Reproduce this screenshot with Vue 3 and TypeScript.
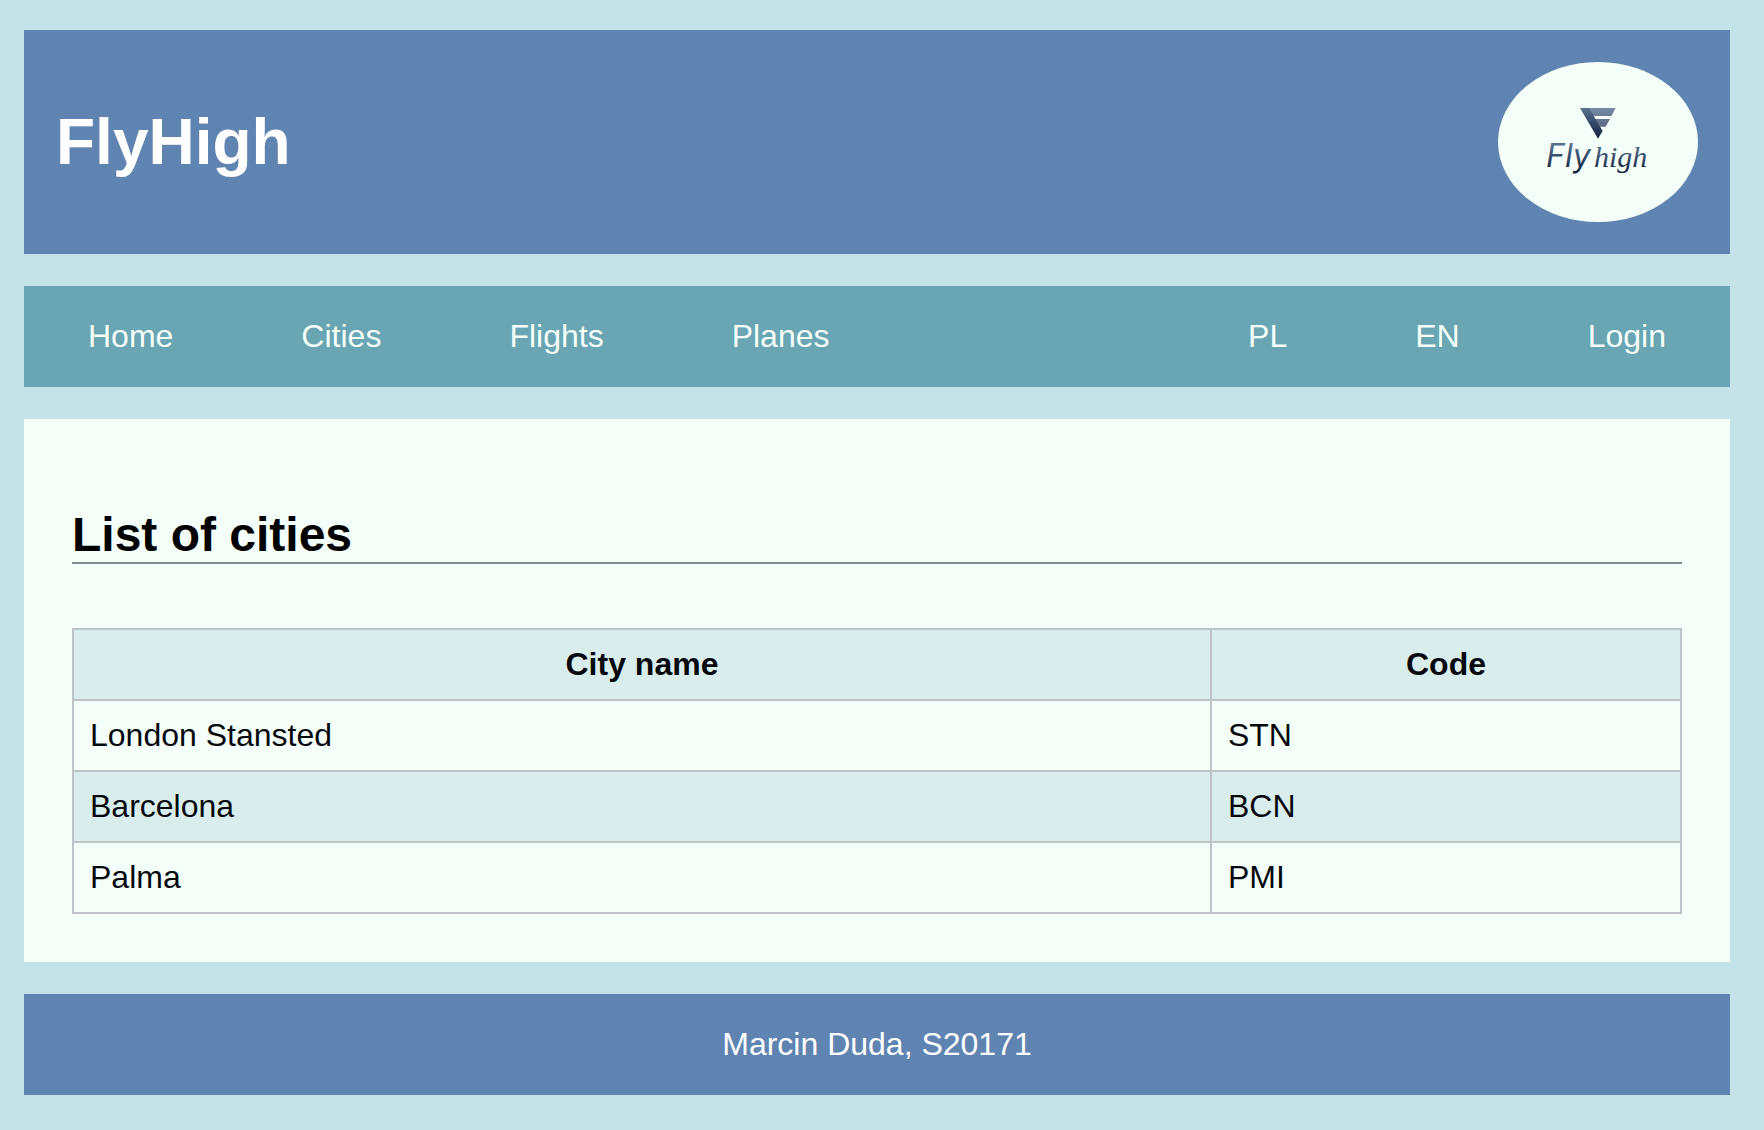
<script setup lang="ts">
interface NavItem {
  label: string
  href: string
}

interface City {
  name: string
  code: string
}

const pages: NavItem[] = [
  { label: 'Home', href: '#home' },
  { label: 'Cities', href: '#cities' },
  { label: 'Flights', href: '#flights' },
  { label: 'Planes', href: '#planes' },
]

const account: NavItem[] = [
  { label: 'PL', href: '#pl' },
  { label: 'EN', href: '#en' },
  { label: 'Login', href: '#login' },
]

const cities: City[] = [
  { name: 'London Stansted', code: 'STN' },
  { name: 'Barcelona', code: 'BCN' },
  { name: 'Palma', code: 'PMI' },
]
</script>

<template>
  <div class="page">
    <header class="banner">
      <h1>FlyHigh</h1>
      <svg class="logo" viewBox="0 0 200 160" role="img" aria-label="Fly high">
        <defs>
          <linearGradient id="stem" x1="0" y1="0" x2="0" y2="1">
            <stop offset="0" stop-color="#56718f" />
            <stop offset="1" stop-color="#14213f" />
          </linearGradient>
          <linearGradient id="bars" gradientUnits="userSpaceOnUse" x1="0" y1="46" x2="0" y2="65">
            <stop offset="0" stop-color="#788ca5" />
            <stop offset="1" stop-color="#5c6a84" />
          </linearGradient>
          <linearGradient id="word" gradientUnits="userSpaceOnUse" x1="0" y1="82" x2="0" y2="110">
            <stop offset="0" stop-color="#56718f" />
            <stop offset="1" stop-color="#14213f" />
          </linearGradient>
        </defs>
        <path fill="url(#bars)" d="M90 46H117.7L113.4 54H94ZM96 57H112L107.6 64.8H100Z" />
        <path fill="url(#stem)" d="M82 46H91L104.6 69L100 76.7Z" />
        <text class="logo-fly" x="48" y="105" fill="url(#word)">Fly</text>
        <text class="logo-high" x="96" y="105" fill="url(#word)">high</text>
      </svg>
    </header>

    <nav class="menu">
      <ul>
        <li v-for="item in pages" :key="item.label">
          <a :href="item.href">{{ item.label }}</a>
        </li>
      </ul>
      <ul>
        <li v-for="item in account" :key="item.label">
          <a :href="item.href">{{ item.label }}</a>
        </li>
      </ul>
    </nav>

    <main class="content">
      <h2>List of cities</h2>
      <table>
        <thead>
          <tr>
            <th scope="col">City name</th>
            <th scope="col">Code</th>
          </tr>
        </thead>
        <tbody>
          <tr v-for="city in cities" :key="city.code">
            <td>{{ city.name }}</td>
            <td>{{ city.code }}</td>
          </tr>
        </tbody>
      </table>
    </main>

    <footer class="footer">Marcin Duda, S20171</footer>
  </div>
</template>

<style>
body {
  background: #c4e3e8;
}
</style>

<style scoped>
.page {
  display: flex;
  flex-direction: column;
  gap: 32px;
  padding: 30px 34px 34px 24px;
  font-family: "Liberation Sans", Arial, Helvetica, sans-serif;
  font-size: 32px;
  line-height: 37px;
}

.banner {
  display: flex;
  align-items: center;
  justify-content: space-between;
  padding: 32px;
  background: #5f84b1;
  color: #ffffff;
}

h1 {
  margin: 0;
  font-size: 64px;
  line-height: 74px;
}

.logo {
  width: 200px;
  height: 160px;
  border-radius: 50%;
  background: #f5fffa;
}

.logo-fly {
  font: italic 400 32px Inter, sans-serif;
}

.logo-high {
  font: italic 400 30px "Liberation Serif", serif;
}

.menu {
  display: flex;
  justify-content: space-between;
  background: #69a5b3;
}

.menu ul {
  display: flex;
  margin: 0;
  padding: 0;
  list-style: none;
}

.menu a {
  display: block;
  padding: 32px 64px;
  color: #f5fffa;
  text-decoration: none;
}

.content {
  padding: 88px 48px 48px;
  background: #f5fffa;
  color: #000000;
}

h2 {
  margin: 0 0 64px;
  border-bottom: 2px solid #7f8c8d;
  font-size: 48px;
  line-height: 55px;
}

table {
  width: 100%;
  border-collapse: collapse;
  color: #05080c;
}

th,
td {
  padding: 16px;
  border: 2px solid #bdc3c7;
}

td {
  text-align: left;
}

thead tr,
tbody tr:nth-child(even) {
  background: #d9eeec;
}

.footer {
  padding: 32px;
  background: #5f84b1;
  color: #ffffff;
  text-align: center;
}
</style>
